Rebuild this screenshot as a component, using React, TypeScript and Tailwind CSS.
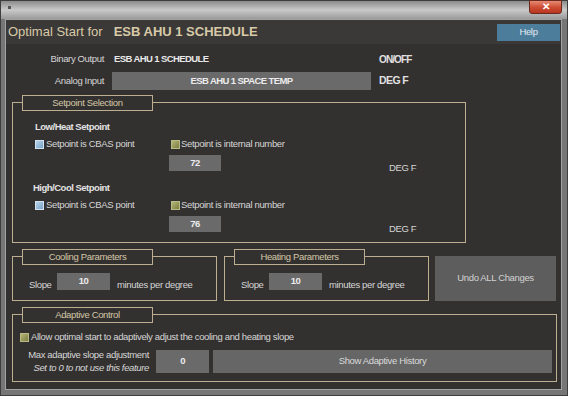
import React from "react";

// Colours picked off the screenshot
const TAN = "border-[#bcae8f]";

function Legend({ label }: { label: string }) {
  return (
    <div className="absolute left-[9px] top-[-8px] w-[131px] h-[16px] border border-[#bcae8f] bg-[#333130] text-center leading-[14px] text-[#d4c7a6]">
      {label}
    </div>
  );
}

function Check({ kind }: { kind: "blue" | "olive" }) {
  return kind === "blue" ? (
    <span className="inline-block shrink-0 w-[9px] h-[9px] border border-[#d2e2f0] bg-gradient-to-br from-[#b8d4ea] to-[#7aa4c8]" />
  ) : (
    <span className="inline-block shrink-0 w-[9px] h-[9px] border border-[#b9bb84] bg-gradient-to-br from-[#b4b676] to-[#7c7e42]" />
  );
}

function Field({ value, className = "" }: { value: string; className?: string }) {
  return (
    <div
      className={`flex items-center justify-center bg-[#6a6a6a] font-bold tracking-[-0.6px] text-[#ececec] ${className}`}
    >
      {value}
    </div>
  );
}

function SetpointBlock({ title, value, shift }: { title: string; value: string; shift: boolean }) {
  return (
    <>
      <div
        className={`h-[12px] leading-[12px] font-bold tracking-[-0.5px] text-[#e2e2e2] ${shift ? "pl-[22px]" : "pl-[20px]"}`}
      >
        {title}
      </div>
      <div className="mt-[5px] flex h-[12px] items-center pl-[22px]">
        <div className="flex w-[136px] items-center gap-[2px]">
          <Check kind="blue" />
          <span>Setpoint is CBAS point</span>
        </div>
        <div className="flex items-center gap-[1px]">
          <Check kind="olive" />
          <span>Setpoint is internal number</span>
        </div>
      </div>
      <div className="mt-[5px] flex pl-[156px]">
        <Field value={value} className="w-[52px] h-[16px]" />
        <span className="ml-[168px] self-end mb-[-3px] leading-[12px]">DEG F</span>
      </div>
    </>
  );
}

function SlopeBox({ title }: { title: string }) {
  return (
    <div className={`relative w-[205px] h-[45px] border ${TAN}`}>
      <Legend label={title} />
      <div className="flex items-end pl-[16px] pt-[16px]">
        <span className="w-[28px] leading-[12px] mb-[-1px]">Slope</span>
        <Field value="10" className="w-[53px] h-[17px]" />
        <span className="ml-[7px] leading-[12px] mb-[-1px]">minutes per degree</span>
      </div>
    </div>
  );
}

export default function App() {
  return (
    <div className="w-[568px] h-[396px] flex flex-col border border-[#3e3e3e] bg-[#767676] font-['Liberation_Sans',Arial,sans-serif] text-[9.5px] tracking-[-0.35px] text-[#d6d6d6]">
      {/* window title bar */}
      <div className="relative h-[18px] shrink-0 bg-gradient-to-b from-[#8c8c8c] via-[#c9c9c9] to-[#9a9a9a]">
        <span className="absolute left-[7px] top-[5px] w-[3px] h-[3px] bg-[#555]" />
        <div className="absolute right-[5px] top-[-1px] w-[33px] h-[14px] rounded-b-[3px] border border-[#6b2a1e] bg-gradient-to-b from-[#e58a74] via-[#cf4f36] to-[#b8341e] flex items-center justify-center">
          <span className="text-[10px] font-bold leading-none text-white">✕</span>
        </div>
      </div>

      <div className="ml-[4px] mr-[5px] mb-[5px] flex-1 flex flex-col border border-[#a2a2a2]">
        {/* header */}
        <div className="h-[24px] shrink-0 flex items-center justify-between bg-[#3b3937] pl-[2px] pr-[1px]">
          <div className="flex items-baseline text-[13px] tracking-normal text-[#d8caa8]">
            <span>Optimal Start for</span>
            <span className="ml-[11px] font-bold">ESB AHU 1 SCHEDULE</span>
          </div>
          <div className="w-[63px] h-[17px] flex items-center justify-center bg-[#4c7d9b] text-[#e4ecf2]">
            Help
          </div>
        </div>

        {/* body */}
        <div className="flex-1 bg-[#333130]">
          <div className="mt-[8px] flex h-[14px] items-center">
            <span className="w-[98px] text-right">Binary Output</span>
            <span className="ml-[8px] w-[259px] pl-[2px] font-bold tracking-[-0.6px] text-[#e8e8e8]">
              ESB AHU 1 SCHEDULE
            </span>
            <span className="ml-[8px] text-[10px] tracking-[-0.9px] font-bold text-[#e0e0e0]">ON/OFF</span>
          </div>
          <div className="mt-[6px] flex h-[18px] items-center">
            <span className="w-[98px] text-right">Analog Input</span>
            <Field value="ESB AHU 1 SPACE TEMP" className="ml-[8px] w-[259px] h-[18px]" />
            <span className="ml-[8px] text-[10.5px] tracking-[-0.6px] font-bold text-[#e0e0e0]">DEG F</span>
          </div>

          {/* setpoint selection */}
          <div className={`relative mt-[12px] ml-[6px] w-[454px] h-[141px] border ${TAN}`}>
            <Legend label="Setpoint Selection" />
            <div className="pt-[18px]">
              <SetpointBlock title="Low/Heat Setpoint" value="72" shift />
              <div className="mt-[11px]">
                <SetpointBlock title="High/Cool Setpoint" value="76" shift={false} />
              </div>
            </div>
          </div>

          {/* slope parameters */}
          <div className="mt-[13px] ml-[6px] flex">
            <SlopeBox title="Cooling Parameters" />
            <div className="ml-[7px]">
              <SlopeBox title="Heating Parameters" />
            </div>
            <div className="ml-[6px] w-[121px] h-[45px] flex items-center justify-center bg-[#5d5d5d] text-[#d2d2d2]">
              Undo ALL Changes
            </div>
          </div>

          {/* adaptive control */}
          <div className={`relative mt-[13px] ml-[6px] w-[545px] h-[68px] border ${TAN}`}>
            <Legend label="Adaptive Control" />
            <div className="pt-[18px] pl-[7px] flex h-[27px] items-center gap-[2px]">
              <Check kind="olive" />
              <span>Allow optimal start to adaptively adjust the cooling and heating slope</span>
            </div>
            <div className="mt-[6px] flex items-center">
              <div className="w-[136px] flex flex-col items-end whitespace-nowrap leading-[13px]">
                <span>Max adaptive slope adjustment</span>
                <span className="italic">Set to 0 to not use this feature</span>
              </div>
              <Field value="0" className="ml-[7px] w-[53px] h-[23px]" />
              <div className="ml-[4px] w-[339px] h-[23px] flex items-center justify-center bg-[#666666] text-[#dadada]">
                Show Adaptive History
              </div>
            </div>
          </div>
        </div>
      </div>
    </div>
  );
}
